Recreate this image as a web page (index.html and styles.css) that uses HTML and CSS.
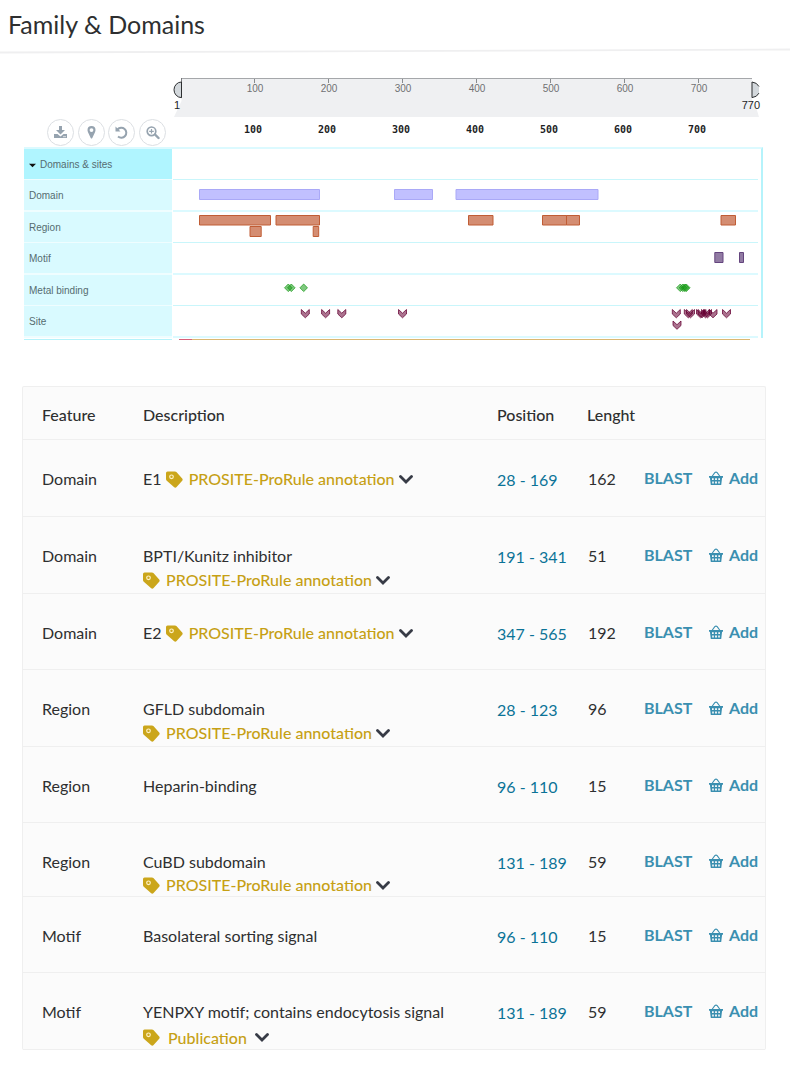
FILE: index.html
```html
<!DOCTYPE html>
<html lang="en">
<head>
<meta charset="utf-8">
<title>Family &amp; Domains</title>
<link rel="stylesheet" href="styles.css">
</head>
<body>
<svg class="sprite" aria-hidden="true">
  <symbol id="tag" viewBox="0 0 17 17"><path fill="#cba61b" d="M1.500 .5H9q.8 0 1.400.6l5.800 6.500q.9 1.100 0 2.200l-5.600 6.300q-1.200 1.200-2.400.2L.8 9.800Q0 9.100 0 8.100V2Q0 .5 1.500 .5z"/><circle cx="5.500" cy="5.800" r="1.800" fill="#cba61b" stroke="#fff3c8" stroke-width="1.200"/></symbol>
  <symbol id="chev" viewBox="0 0 14 9"><path d="M1.500 1.500 7 7l5.500-5.500" fill="none" stroke="#373b46" stroke-width="2.800" stroke-linecap="round"/></symbol>
  <symbol id="basket" viewBox="0 0 14 14"><path d="M3 5.500 5.800 1.700Q7 .5 8.200 1.700L11 5.500" fill="none" stroke="#3a8fb0" stroke-width="1.100"/><path fill="#3a8fb0" d="M0 5h14v1.800h-.9L12.200 14H1.800L.9 6.800H0z"/><path d="M3 7.200h1.700v1.900H3zM6.100 7.200h1.800v1.900H6.100zM9.300 7.200H11v1.900H9.300zM3.200 10.500h1.600v1.900H3.200zM6.100 10.500h1.800v1.900H6.100zM9.200 10.500h1.600v1.900H9.200z" fill="#fbfbfb"/></symbol>
  <symbol id="site" viewBox="-5 -1 10 11" overflow="visible"><path d="M-4 0v4.500L0 8.300l4-3.800V0L0 3.700z"/></symbol>
</svg>

<header class="page-head">
  <h1>Family &amp; Domains</h1>
  <svg class="rule" viewBox="0 0 790 6" preserveAspectRatio="none" aria-hidden="true"><path d="M0 4.500 790 1.500" stroke="#efeff0" stroke-width="1.800"/></svg>
</header>

<main>
<section class="viewer" aria-label="Feature viewer">
  <div class="viewer-top">
    <div class="tools">
      <button type="button" aria-label="Download"><svg viewBox="0 0 15 15"><path d="M6 1h3v4h3L7.500 9.500 3 5h3z"/><path d="M1 9h3.500l3 2.500 3-2.500H14v4H1z"/><path d="M10 11.700h3" stroke="#fff" stroke-width=".7"/></svg></button>
      <button type="button" aria-label="Highlight region"><svg viewBox="0 0 15 15"><path fill-rule="evenodd" d="M7.500 1a4 4 0 0 1 4 4q0 1-.5 2.200L8.300 13q-.8 1.200-1.600 0L4 7.200Q3.500 6 3.500 5a4 4 0 0 1 4-4zm0 2.200a1.900 1.900 0 1 0 0 3.800 1.900 1.900 0 0 0 0-3.800z"/></svg></button>
      <button type="button" aria-label="Reset view"><svg viewBox="0 0 15 15"><path d="M3.500 4.500A5 5 0 1 1 4 11.500" fill="none" stroke="#96a3af" stroke-width="2"/><path d="M1.500 1.500v5h5z"/></svg></button>
      <button type="button" aria-label="Zoom in"><svg viewBox="0 0 15 15"><path d="M6.500 2a4.300 4.300 0 1 1 0 8.600 4.300 4.300 0 0 1 0-8.600z" fill="none" stroke="#96a3af" stroke-width="1.700"/><path d="m10 9.500 3.500 3.500" stroke="#96a3af" stroke-width="2.400" stroke-linecap="round"/><path d="M4.200 6.300h4.600M6.500 4v4.600" stroke="#96a3af" stroke-width="1.200"/></svg></button>
    </div>
    <svg class="ruler" viewBox="0 0 588 71" role="img" aria-label="Sequence positions 1 to 770">
      <path d="M8.500 3H579v23l4 5 3 10H1l7.500-16z" fill="#eff0f2"/>
      <path d="M8.500 2.500H579" stroke="#a5a7aa"/>
      <path d="M8.500 2v20" stroke="#77797c"/>
      <path d="M8.500 6a7.500 7.800 0 0 0 0 15.600zM579 6q5 .5 7 5v6q-2 4-7 4.600z" fill="#d3d8dc"/>
      <path d="M8.500 6a7.500 7.800 0 0 0 0 15.600zM586 10.500Q584 6.500 579 6v15.600q5-.5 7-4.500" fill="none" stroke="#2d2f31"/>
      <path d="M81.500 3v4M155.500 3v4M229.500 3v4M303.500 3v4M377.500 3v4M451.500 3v4M525.500 3v4" stroke="#8a8c8f"/>
      <g class="ticks"><text x="82" y="16">100</text><text x="156" y="16">200</text><text x="230" y="16">300</text><text x="304" y="16">400</text><text x="378" y="16">500</text><text x="452" y="16">600</text><text x="526" y="16">700</text></g>
      <g class="ends"><text x="1" y="33">1</text><text x="587" y="33" text-anchor="end">770</text></g>
      <g class="positions"><text x="80" y="57">100</text><text x="154" y="57">200</text><text x="228" y="57">300</text><text x="302" y="57">400</text><text x="376" y="57">500</text><text x="450" y="57">600</text><text x="524" y="57">700</text></g>
    </svg>
  </div>
  <div class="tracks">
    <div class="track group"><button type="button" class="name" aria-expanded="true"><svg viewBox="0 0 8 5" aria-hidden="true"><path d="M0 .5h8L4 4.500z"/></svg>Domains &amp; sites</button><div class="lane"></div></div>
    <div class="track"><div class="name">Domain</div><div class="lane">
      <svg class="domain" viewBox="0 0 585 30"><path d="M26.500 9.500h120v10h-120zM221.500 9.500h38v10h-38zM283 9.500h142v10H283z"/></svg></div></div>
    <div class="track"><div class="name">Region</div><div class="lane">
      <svg class="region" viewBox="0 0 585 30"><path d="M26.500 3.500h71v9.500h-71zM103 3.500h43.500v9.500H103zM295.500 3.500h24.500v9.500h-24.500zM369.500 3.500h24v9.500h-24zM393.500 3.500h13v9.500h-13zM548 3.500h14.500v9.500H548zM77 14.500h11.200v10H77zM140.200 14.500h5.500v10h-5.500z"/></svg></div></div>
    <div class="track"><div class="name">Motif</div><div class="lane">
      <svg class="motif" viewBox="0 0 585 30"><path d="M541.800 9.500h8.200v10h-8.200zM566.500 9.500h4v10h-4z"/></svg></div></div>
    <div class="track"><div class="name">Metal binding</div><div class="lane">
      <svg class="metal" viewBox="0 0 585 30"><path d="m115.300 9 3.800 3.800-3.800 3.800-3.800-3.800z"/><path d="m118.300 9 3.800 3.800-3.800 3.800-3.800-3.800z"/><path d="m130.700 9 3.800 3.800-3.800 3.800-3.800-3.800z"/><path d="m507.300 9 3.800 3.800-3.800 3.800-3.800-3.800z"/><path d="m510 9 3.800 3.800-3.800 3.800-3.800-3.800z"/><path d="m512 9 3.800 3.800-3.800 3.800-3.800-3.800z"/><path d="m513.300 9 3.800 3.800-3.800 3.800-3.800-3.800z"/></svg></div></div>
    <div class="track"><div class="name">Site</div><div class="lane">
      <svg class="site" viewBox="0 0 585 30"><use href="#site" x="127.300" y="2.500" width="10" height="11"/><use href="#site" x="147.600" y="2.500" width="10" height="11"/><use href="#site" x="163.800" y="2.500" width="10" height="11"/><use href="#site" x="224.500" y="2.500" width="10" height="11"/><use href="#site" x="498.300" y="2.500" width="10" height="11"/><use href="#site" x="510.300" y="2.500" width="10" height="11"/><use href="#site" x="512.500" y="2.500" width="10" height="11"/><use href="#site" x="522.500" y="2.500" width="10" height="11"/><use href="#site" x="524" y="2.500" width="10" height="11"/><use href="#site" x="527.500" y="2.500" width="10" height="11"/><use href="#site" x="529.500" y="2.500" width="10" height="11"/><use href="#site" x="535" y="2.500" width="10" height="11"/><use href="#site" x="548.500" y="2.500" width="10" height="11"/><use href="#site" x="499" y="14" width="10" height="11"/></svg></div></div>
  </div>
  <svg class="next-track" viewBox="0 0 739 2" preserveAspectRatio="none" aria-hidden="true"><path d="M0 1.500h148" stroke="#b5f3fb"/><path d="M155 1.500h13" stroke="#d95f78"/><path d="M168 1.500h558" stroke="#dcb871"/></svg>
</section>

<table class="features">
  <colgroup><col class="c-feature"><col><col class="c-position"><col class="c-length"><col class="c-blast"><col class="c-add"></colgroup>
  <thead><tr><th scope="col">Feature</th><th scope="col">Description</th><th scope="col">Position</th><th scope="col">Lenght</th><td></td><td></td></tr></thead>
  <tbody>
    <tr><td>Domain</td><td>E1 <button type="button" class="note"><svg class="tag"><use href="#tag"/></svg>PROSITE-ProRule annotation<svg class="chev"><use href="#chev"/></svg></button></td><td><a href="#p1">28 - 169</a></td><td>162</td><td><button type="button" class="action">BLAST</button></td><td><button type="button" class="action"><svg><use href="#basket"/></svg>Add</button></td></tr>
    <tr><td>Domain</td><td>BPTI/Kunitz inhibitor<br><button type="button" class="note"><svg class="tag"><use href="#tag"/></svg>PROSITE-ProRule annotation<svg class="chev"><use href="#chev"/></svg></button></td><td><a href="#p2">191 - 341</a></td><td>51</td><td><button type="button" class="action">BLAST</button></td><td><button type="button" class="action"><svg><use href="#basket"/></svg>Add</button></td></tr>
    <tr class="short"><td>Domain</td><td>E2 <button type="button" class="note"><svg class="tag"><use href="#tag"/></svg>PROSITE-ProRule annotation<svg class="chev"><use href="#chev"/></svg></button></td><td><a href="#p3">347 - 565</a></td><td>192</td><td><button type="button" class="action">BLAST</button></td><td><button type="button" class="action"><svg><use href="#basket"/></svg>Add</button></td></tr>
    <tr><td>Region</td><td>GFLD subdomain<br><button type="button" class="note"><svg class="tag"><use href="#tag"/></svg>PROSITE-ProRule annotation<svg class="chev"><use href="#chev"/></svg></button></td><td><a href="#p4">28 - 123</a></td><td>96</td><td><button type="button" class="action">BLAST</button></td><td><button type="button" class="action"><svg><use href="#basket"/></svg>Add</button></td></tr>
    <tr class="short"><td>Region</td><td>Heparin-binding</td><td><a href="#p5">96 - 110</a></td><td>15</td><td><button type="button" class="action">BLAST</button></td><td><button type="button" class="action"><svg><use href="#basket"/></svg>Add</button></td></tr>
    <tr class="tight"><td>Region</td><td>CuBD subdomain<br><button type="button" class="note"><svg class="tag"><use href="#tag"/></svg>PROSITE-ProRule annotation<svg class="chev"><use href="#chev"/></svg></button></td><td><a href="#p6">131 - 189</a></td><td>59</td><td><button type="button" class="action">BLAST</button></td><td><button type="button" class="action"><svg><use href="#basket"/></svg>Add</button></td></tr>
    <tr class="short"><td>Motif</td><td>Basolateral sorting signal</td><td><a href="#p7">96 - 110</a></td><td>15</td><td><button type="button" class="action">BLAST</button></td><td><button type="button" class="action"><svg><use href="#basket"/></svg>Add</button></td></tr>
    <tr><td>Motif</td><td>YENPXY motif; contains endocytosis signal<br><button type="button" class="note publication"><svg class="tag"><use href="#tag"/></svg>Publication<svg class="chev"><use href="#chev"/></svg></button></td><td><a href="#p8">131 - 189</a></td><td>59</td><td><button type="button" class="action">BLAST</button></td><td><button type="button" class="action"><svg><use href="#basket"/></svg>Add</button></td></tr>
  </tbody>
</table>
</main>
</body>
</html>
```
FILE: styles.css
```css
* { box-sizing: border-box; }
body {
  margin: 0;
  background: #fff;
  color: #2e2f30;
  font: 16px/24px Lato, "Liberation Sans", sans-serif;
}
button {
  margin: 0;
  padding: 0;
  border: 0;
  background: none;
  color: inherit;
  font: inherit;
  cursor: pointer;
}
.sprite { position: absolute; width: 0; height: 0; }

.page-head h1 {
  margin: 0;
  padding: 8px 8px 8px;
  font-size: 25px;
  line-height: 32px;
  font-weight: 400;
}
.rule { display: block; width: 100%; height: 6px; }

/* Feature viewer */
.viewer {
  margin: 22px 27px 0 24px;
  font-family: "Liberation Sans", Arial, sans-serif;
}
.viewer-top {
  display: grid;
  grid-template-columns: 149px 1fr;
  align-items: end;
  padding-right: 2px;
}
.tools {
  display: flex;
  justify-content: space-between;
  width: 119px;
  margin: 0 0 1px 23px;
}
.tools button {
  display: flex;
  align-items: center;
  justify-content: center;
  width: 27px;
  height: 27px;
  border: 1px solid #dcdfe3;
  border-radius: 50%;
}
.tools svg { width: 15px; height: 15px; fill: #96a3af; }
.ruler { display: block; width: 100%; }
.ticks { font-size: 10px; fill: #6f7173; text-anchor: middle; }
.ends { font-size: 11px; fill: #1d1e1f; }
.positions {
  font: bold 10px "DejaVu Sans Mono", monospace;
  fill: #1d1e1f;
  text-anchor: middle;
}
.tracks { border-top: 2px solid #dcfaff; border-right: 2px solid #b5f3fb; }
.track {
  display: grid;
  grid-template-columns: 148px 1fr;
  column-gap: 1px;
}
.name {
  display: flex;
  align-items: center;
  padding: 2px 5px 0;
  border-bottom: 1px solid #effdff;
  background: #d9faff;
  color: #566c70;
  font-size: 10px;
  line-height: 14px;
}
.group .name { gap: 4px; background: #b0f5ff; }
.name svg { width: 7px; height: 5px; fill: #111; }
.lane {
  min-height: 31px;
  margin-right: 3px;
  border-bottom: 1px solid #c9f6fb;
}
.lane svg { display: block; width: 100%; }
.track:nth-child(even) .name,
.track:nth-child(even) .lane { border-bottom-width: 2px; }
.track:nth-child(even) .lane { border-bottom-color: #dcfaff; }
.domain { fill: #c1c0ff; stroke: #aaa9f7; }
.region { fill: #d48d72; stroke: #c05d35; }
.motif { fill: #917ba3; stroke: #64457e; }
.metal { fill: #169a16; fill-opacity: .55; stroke: #169a16; stroke-opacity: .7; }
.site { fill: #660033; fill-opacity: .55; stroke: #660033; stroke-opacity: .75; }
.next-track { display: block; width: 100%; height: 2px; }

/* Feature table */
.features {
  width: calc(100% - 46px);
  margin: 46px 24px 32px 22px;
  border: 1px solid #efefef;
  border-bottom: 0;
  border-radius: 2px;
  border-spacing: 0;
  table-layout: fixed;
  background: #fbfbfb;
}
.c-feature { width: 120px; }
.c-position { width: 90px; }
.c-length { width: 57px; }
.c-blast { width: 65px; }
.c-add { width: 56px; }
.features th,
.features td {
  padding: 0;
  border-bottom: 1px solid #efefef;
  text-align: left;
  vertical-align: top;
  white-space: nowrap;
}
.features th,
.note { font-family: "Lato Medium", Lato, "Liberation Sans", sans-serif; font-weight: 500; }
.features th { height: 53px; padding-top: 16px; }
.features tbody td { height: 77px; padding-top: 27px; }
.features .short td { height: 76px; }
.features .tight td { height: 74px; }
.features th:first-child,
.features td:first-child { padding-left: 19px; }
.features td:nth-child(4) { padding-left: 1px; }
.features tbody td:nth-child(3) { padding-top: 28px; }
.features tbody td:nth-child(n+5) { padding-top: 26px; }
.features a { color: #0b7397; text-decoration: none; }
.note {
  display: inline-flex;
  align-items: center;
  height: 24px;
  color: #c6a014;
  vertical-align: top;
}
.tag { width: 17px; height: 17px; margin-right: 6px; }
.chev { width: 14px; height: 9px; margin-left: 4px; }
.tight .note { display: flex; height: 22px; }
.publication { display: flex; height: 25px; padding-top: 2px; }
.publication .tag { margin-right: 8px; }
.publication .chev { margin-left: 8px; }
.action {
  display: flex;
  align-items: center;
  gap: 6px;
  color: #3a8fb0;
  font-weight: 700;
}
.action svg { width: 14px; height: 14px; }
```
